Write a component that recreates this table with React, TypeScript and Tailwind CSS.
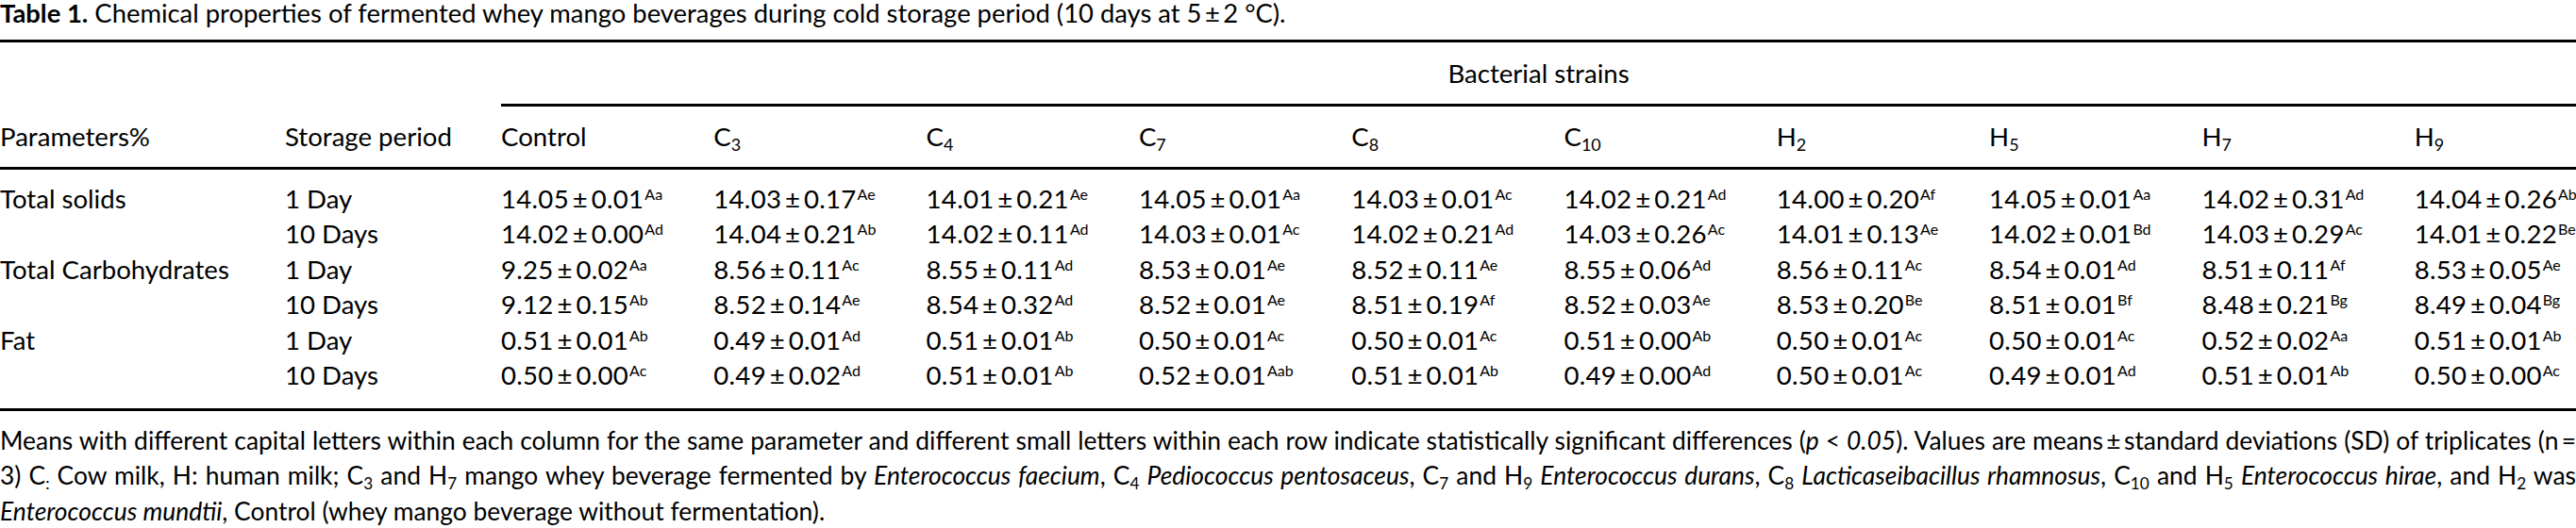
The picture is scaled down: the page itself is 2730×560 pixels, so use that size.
import React from "react";

type Cell = [string, string, string];

const cols: [string, string][] = [
  ["Control", ""],
  ["C", "3"],
  ["C", "4"],
  ["C", "7"],
  ["C", "8"],
  ["C", "10"],
  ["H", "2"],
  ["H", "5"],
  ["H", "7"],
  ["H", "9"],
];

const p = (s: string): Cell[] =>
  s.split("|").map((x) => {
    const [a, b, c] = x.trim().split(" ");
    return [a, b, c] as Cell;
  });

const rows: { param: string; period: string; cells: Cell[] }[] = [
  {
    param: "Total solids",
    period: "1 Day",
    cells: p(
      "14.05 0.01 Aa|14.03 0.17 Ae|14.01 0.21 Ae|14.05 0.01 Aa|14.03 0.01 Ac|14.02 0.21 Ad|14.00 0.20 Af|14.05 0.01 Aa|14.02 0.31 Ad|14.04 0.26 Ab"
    ),
  },
  {
    param: "",
    period: "10 Days",
    cells: p(
      "14.02 0.00 Ad|14.04 0.21 Ab|14.02 0.11 Ad|14.03 0.01 Ac|14.02 0.21 Ad|14.03 0.26 Ac|14.01 0.13 Ae|14.02 0.01 Bd|14.03 0.29 Ac|14.01 0.22 Be"
    ),
  },
  {
    param: "Total Carbohydrates",
    period: "1 Day",
    cells: p(
      "9.25 0.02 Aa|8.56 0.11 Ac|8.55 0.11 Ad|8.53 0.01 Ae|8.52 0.11 Ae|8.55 0.06 Ad|8.56 0.11 Ac|8.54 0.01 Ad|8.51 0.11 Af|8.53 0.05 Ae"
    ),
  },
  {
    param: "",
    period: "10 Days",
    cells: p(
      "9.12 0.15 Ab|8.52 0.14 Ae|8.54 0.32 Ad|8.52 0.01 Ae|8.51 0.19 Af|8.52 0.03 Ae|8.53 0.20 Be|8.51 0.01 Bf|8.48 0.21 Bg|8.49 0.04 Bg"
    ),
  },
  {
    param: "Fat",
    period: "1 Day",
    cells: p(
      "0.51 0.01 Ab|0.49 0.01 Ad|0.51 0.01 Ab|0.50 0.01 Ac|0.50 0.01 Ac|0.51 0.00 Ab|0.50 0.01 Ac|0.50 0.01 Ac|0.52 0.02 Aa|0.51 0.01 Ab"
    ),
  },
  {
    param: "",
    period: "10 Days",
    cells: p(
      "0.50 0.00 Ac|0.49 0.02 Ad|0.51 0.01 Ab|0.52 0.01 Aab|0.51 0.01 Ab|0.49 0.00 Ad|0.50 0.01 Ac|0.49 0.01 Ad|0.51 0.01 Ab|0.50 0.00 Ac"
    ),
  },
];

const grid = "grid grid-cols-[302px_229px_repeat(9,225.3px)_1fr]";

function Sub({ children }: { children: React.ReactNode }) {
  return <sub className="text-[0.65em] bottom-[-0.28em]">{children}</sub>;
}

function I({ children }: { children: React.ReactNode }) {
  return <i className="italic">{children}</i>;
}

export default function App() {
  return (
    <div className="w-[2730px] h-[560px] overflow-hidden bg-white text-black font-['Lato',sans-serif]">
      {/* Title */}
      <div className="h-[42px]">
        <p className="text-[27.4px] leading-[27px] whitespace-nowrap">
          <span className="font-bold">Table 1.</span>
          {"  "}Chemical properties of fermented whey mango beverages during cold storage period (10 days at 5{"\u2009"}±{"\u2009"}2 °C).
        </p>
      </div>
      <div className="h-[3px] bg-black" />

      {/* Bacterial strains spanner */}
      <div className={`${grid} h-[65px] text-[27.6px]`}>
        <div className="col-start-3 col-span-10 flex items-center justify-center">
          Bacterial strains
        </div>
      </div>
      <div className={`${grid} h-[3px]`}>
        <div className="col-start-3 col-span-10 bg-black" />
      </div>

      {/* Header row */}
      <div className={`${grid} h-[64px] text-[27.6px] items-center`}>
        <div>Parameters%</div>
        <div>Storage period</div>
        {cols.map(([a, b], i) => (
          <div key={i} className="whitespace-nowrap">
            {a}
            {b && <Sub>{b}</Sub>}
          </div>
        ))}
      </div>
      <div className="h-[3px] bg-black" />

      {/* Body */}
      <div className="pt-[11.5px] pb-[16.4px] text-[27.6px] leading-[37.6px]">
        {rows.map((r, ri) => (
          <div key={ri} className={`${grid} h-[37.6px]`}>
            <div className="whitespace-nowrap">{r.param}</div>
            <div className="whitespace-nowrap">{r.period}</div>
            {r.cells.map(([m, sd, sup], ci) => (
              <div key={ci} className="whitespace-nowrap tracking-[0.01em]">
                {m}
                {"\u2009"}±{"\u2009"}
                {sd}
                <sup className="text-[16px] top-[-9px] ml-[1px] tracking-normal">{sup}</sup>
              </div>
            ))}
          </div>
        ))}
      </div>
      <div className="h-[3px] bg-black" />

      {/* Footnote */}
      <div className="mt-[12.5px] text-[26.4px] leading-[37.5px]">
        <div className="whitespace-nowrap text-justify [text-align-last:justify]">
          Means with different capital letters within each column for the same parameter and different small letters within each row indicate statistically significant differences (<I>p</I> &lt; <I>0.05</I>). Values are means{"\u2009"}±{"\u2009"}standard deviations (SD) of triplicates (n{"\u2009"}=
        </div>
        <div className="whitespace-nowrap text-justify [text-align-last:justify]">
          3) C<Sub>:</Sub> Cow milk, H: human milk; C<Sub>3</Sub> and H<Sub>7</Sub> mango whey beverage fermented by <I>Enterococcus faecium</I>, C<Sub>4</Sub> <I>Pediococcus pentosaceus</I>, C<Sub>7</Sub> and H<Sub>9</Sub> <I>Enterococcus durans</I>, C<Sub>8</Sub> <I>Lacticaseibacillus rhamnosus</I>, C<Sub>10</Sub> and H<Sub>5</Sub> <I>Enterococcus hirae</I>, and H<Sub>2</Sub> was
        </div>
        <div className="whitespace-nowrap">
          <I>Enterococcus mundtii</I>, Control (whey mango beverage without fermentation).
        </div>
      </div>
    </div>
  );
}
